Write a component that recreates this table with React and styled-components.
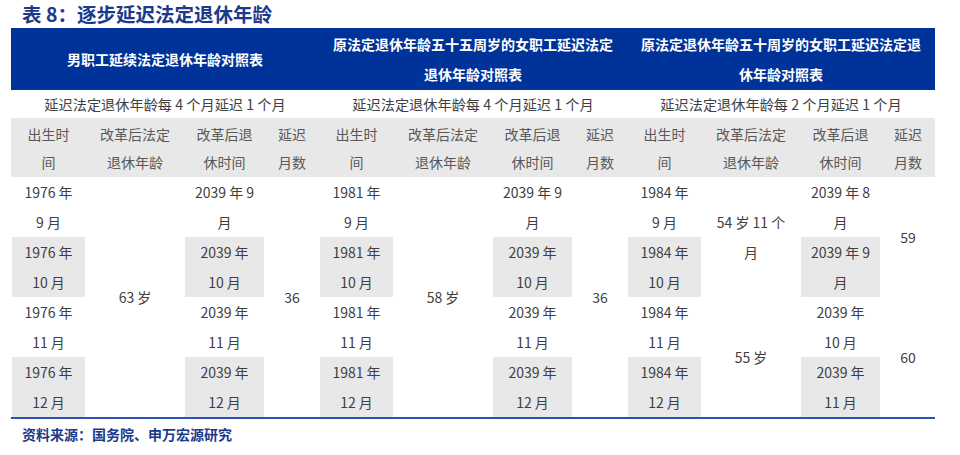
import React from "react";
import styled, { createGlobalStyle } from "styled-components";

const Global = createGlobalStyle`
  html, body { margin: 0; padding: 0; background: #ffffff; }
  body { font-family: "Noto Sans CJK SC", "Noto Sans", sans-serif; }
`;

const Page = styled.div`
  width: 960px;
  height: 455px;
  padding-left: 11px;
  box-sizing: border-box;
  overflow: hidden;
`;

const Title = styled.h1`
  margin: 0;
  height: 28px;
  padding-left: 11px;
  font-size: 19.5px;
  line-height: 28px;
  font-weight: 700;
  color: #1b3a8c;
  letter-spacing: 0;
`;

const Table = styled.div`
  display: grid;
  width: 924px;
  grid-template-columns: repeat(3, 75px 98px 81px 54px);
  grid-template-rows: 62px 28px 59px 60px 60px 60px 60px;
  border-bottom: 2px solid #2a52b8;
`;

const Cell = styled.div`
  grid-column: ${(p) => p.$col} / span ${(p) => p.$span || 1};
  grid-row: ${(p) => p.$row} / span ${(p) => p.$rows || 1};
  display: flex;
  flex-direction: column;
  align-items: center;
  justify-content: center;
  text-align: center;
  font-size: 14px;
  line-height: 30px;
  color: #404040;
  white-space: nowrap;
`;

const GroupHead = styled(Cell)`
  background: #003399;
  color: #ffffff;
  font-weight: 700;
  font-size: 14px;
`;

const SubHead = styled(Cell)`
  line-height: 28px;
  font-size: 14.2px;
  color: #404040;
`;

const ColHead = styled(Cell)`
  background: #e8e8e8;
  color: #595959;
  line-height: 28px;
`;

const DataCell = styled(Cell)`
  background: ${(p) => (p.$shaded ? "#e8e8e8" : "transparent")};
  margin: 0 1px 0 1px;
`;

const Source = styled.div`
  padding-left: 11px;
  margin-top: 5px;
  font-size: 14px;
  line-height: 20px;
  font-weight: 700;
  color: #1b3a8c;
`;

const Lines = ({ lines }) => lines.map((l, i) => <span key={i}>{l}</span>);

const groups = [
  {
    head: ["男职工延续法定退休年龄对照表"],
    sub: "延迟法定退休年龄每 4 个月延迟 1 个月",
    births: [
      ["1976 年", "9 月"],
      ["1976 年", "10 月"],
      ["1976 年", "11 月"],
      ["1976 年", "12 月"],
    ],
    ages: [{ row: 0, rows: 4, lines: ["63 岁"] }],
    retires: [
      ["2039 年 9", "月"],
      ["2039 年", "10 月"],
      ["2039 年", "11 月"],
      ["2039 年", "12 月"],
    ],
    delays: [{ row: 0, rows: 4, text: "36" }],
  },
  {
    head: ["原法定退休年龄五十五周岁的女职工延迟法定", "退休年龄对照表"],
    sub: "延迟法定退休年龄每 4 个月延迟 1 个月",
    births: [
      ["1981 年", "9 月"],
      ["1981 年", "10 月"],
      ["1981 年", "11 月"],
      ["1981 年", "12 月"],
    ],
    ages: [{ row: 0, rows: 4, lines: ["58 岁"] }],
    retires: [
      ["2039 年 9", "月"],
      ["2039 年", "10 月"],
      ["2039 年", "11 月"],
      ["2039 年", "12 月"],
    ],
    delays: [{ row: 0, rows: 4, text: "36" }],
  },
  {
    head: ["原法定退休年龄五十周岁的女职工延迟法定退", "休年龄对照表"],
    sub: "延迟法定退休年龄每 2 个月延迟 1 个月",
    births: [
      ["1984 年", "9 月"],
      ["1984 年", "10 月"],
      ["1984 年", "11 月"],
      ["1984 年", "12 月"],
    ],
    ages: [
      { row: 0, rows: 2, lines: ["54 岁 11 个", "月"] },
      { row: 2, rows: 2, lines: ["55 岁"] },
    ],
    retires: [
      ["2039 年 8", "月"],
      ["2039 年 9", "月"],
      ["2039 年", "10 月"],
      ["2039 年", "11 月"],
    ],
    delays: [
      { row: 0, rows: 2, text: "59" },
      { row: 2, rows: 2, text: "60" },
    ],
  },
];

const colHeads = [
  ["出生时", "间"],
  ["改革后法定", "退休年龄"],
  ["改革后退", "休时间"],
  ["延迟", "月数"],
];

export default function App() {
  return (
    <Page>
      <Global />
      <Title>表 8：逐步延迟法定退休年龄</Title>
      <Table>
        {groups.map((g, gi) => {
          const base = gi * 4 + 1;
          return (
            <React.Fragment key={gi}>
              <GroupHead $col={base} $span={4} $row={1}>
                <Lines lines={g.head} />
              </GroupHead>
              <SubHead $col={base} $span={4} $row={2}>
                {g.sub}
              </SubHead>
              {colHeads.map((c, ci) => (
                <ColHead key={ci} $col={base + ci} $row={3}>
                  <Lines lines={c} />
                </ColHead>
              ))}
              {g.births.map((b, ri) => (
                <DataCell key={"b" + ri} $col={base} $row={4 + ri} $shaded={ri % 2 === 1}>
                  <Lines lines={b} />
                </DataCell>
              ))}
              {g.ages.map((a, ai) => (
                <DataCell key={"a" + ai} $col={base + 1} $row={4 + a.row} $rows={a.rows}>
                  <Lines lines={a.lines} />
                </DataCell>
              ))}
              {g.retires.map((r, ri) => (
                <DataCell key={"r" + ri} $col={base + 2} $row={4 + ri} $shaded={ri % 2 === 1}>
                  <Lines lines={r} />
                </DataCell>
              ))}
              {g.delays.map((d, di) => (
                <DataCell key={"d" + di} $col={base + 3} $row={4 + d.row} $rows={d.rows}>
                  {d.text}
                </DataCell>
              ))}
            </React.Fragment>
          );
        })}
      </Table>
      <Source>资料来源：国务院、申万宏源研究</Source>
    </Page>
  );
}
